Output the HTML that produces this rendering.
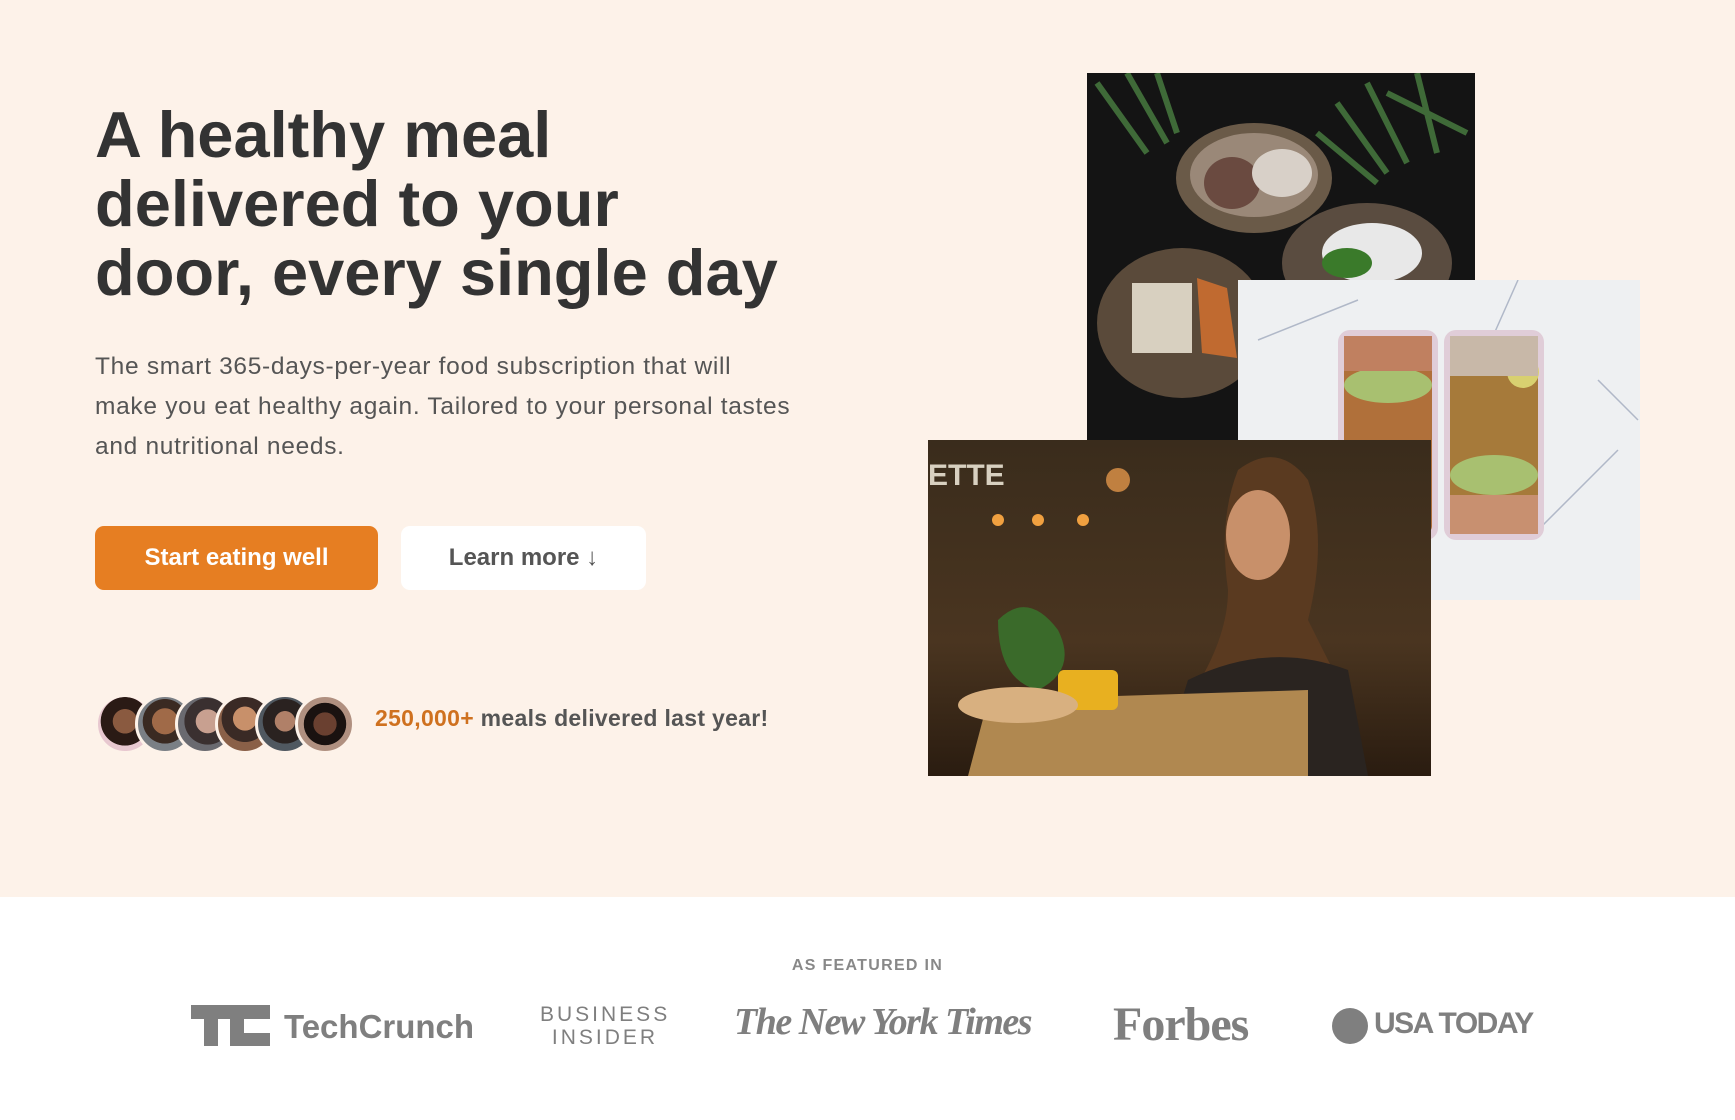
<!DOCTYPE html>
<html><head><meta charset="utf-8"><style>
*{margin:0;padding:0;box-sizing:border-box}
body{width:1735px;height:1120px;background:#fff;font-family:"Liberation Sans",sans-serif;color:#333;position:relative;overflow:hidden}
.hero{position:absolute;left:0;top:0;width:1735px;height:897px;background:#fdf2e9}
h1{position:absolute;left:95px;top:100px;font-size:65px;line-height:69px;font-weight:700;letter-spacing:0px;color:#333;white-space:nowrap}
.p{position:absolute;left:95px;top:347px;font-size:24.5px;line-height:40px;color:#555;white-space:nowrap;letter-spacing:0.7px}
.btn{position:absolute;top:526px;height:64px;border-radius:9px;font-size:24px;font-weight:700;display:flex;align-items:center;justify-content:center}
.b1{left:95px;width:283px;background:#e67e22;color:#fff}
.b2{left:401px;width:245px;background:#fff;color:#555}
.av{position:absolute;top:694px;width:60px;height:60px;border-radius:50%;border:3px solid #fdf2e9}
.dt{position:absolute;left:375px;top:705px;font-size:23px;font-weight:700;color:#555;letter-spacing:0.3px}
.dt b{color:#cf711f}
.img{position:absolute;overflow:hidden}
.ft{position:absolute;top:957px;left:0;width:1735px;text-align:center;font-size:16px;font-weight:700;letter-spacing:1.3px;color:#888}
.lg{position:absolute;color:#7f7f7f}
</style></head><body>
<div class="hero"></div>
<h1>A healthy meal<br>delivered to your<br>door, every single day</h1>
<div class="p">The smart 365-days-per-year food subscription that will<br>make you eat healthy again. Tailored to your personal tastes<br>and nutritional needs.</div>
<div class="btn b1">Start eating well</div>
<div class="btn b2">Learn more ↓</div>
<div class="av" style="left:95px;background:radial-gradient(circle at 50% 45%,#8a5a40 0 30%,#2a1a15 31% 60%,#e8c8d0 61%)"></div>
<div class="av" style="left:135px;background:radial-gradient(circle at 50% 45%,#a06a48 0 32%,#3a2a22 33% 55%,#7a7f85 56%)"></div>
<div class="av" style="left:175px;background:radial-gradient(circle at 55% 45%,#c8a090 0 28%,#3a3030 29% 55%,#6a6a70 56%)"></div>
<div class="av" style="left:215px;background:radial-gradient(circle at 50% 40%,#c8906a 0 28%,#3a2a25 29% 55%,#8a6048 56%)"></div>
<div class="av" style="left:255px;background:radial-gradient(circle at 50% 45%,#b08068 0 25%,#2a2220 26% 55%,#505860 56%)"></div>
<div class="av" style="left:295px;background:radial-gradient(circle at 50% 50%,#6a4030 0 30%,#1a1210 31% 55%,#b09080 56%)"></div>
<div class="dt"><b>250,000+</b> meals delivered last year!</div>

<div class="img" style="left:1087px;top:73px;width:388px;height:367px;background:#131313">
<svg width="388" height="367"><rect width="388" height="367" fill="#141414"/><path d="M10 10 L60 80 M40 0 L80 70 M70 0 L90 60 M250 30 L300 100 M280 10 L320 90 M330 0 L350 80 M300 20 L380 60 M230 60 L290 110" stroke="#3f6a38" stroke-width="6"/>
<ellipse cx="167" cy="105" rx="78" ry="55" fill="#6a5a48"/><ellipse cx="167" cy="102" rx="64" ry="42" fill="#9a8878"/><ellipse cx="145" cy="110" rx="28" ry="26" fill="#6a4a40"/><ellipse cx="195" cy="100" rx="30" ry="24" fill="#d8d0c8"/>
<ellipse cx="280" cy="190" rx="85" ry="60" fill="#5a4c40"/><ellipse cx="285" cy="180" rx="50" ry="30" fill="#e8e8e8"/><ellipse cx="260" cy="190" rx="25" ry="15" fill="#3a7a2a"/>
<ellipse cx="95" cy="250" rx="85" ry="75" fill="#5a4a3a"/><rect x="45" y="210" width="60" height="70" fill="#d8d0c0"/><path d="M110 205 l30 10 l10 70 l-35 -5z" fill="#c06a30"/></svg></div>
<div class="img" style="left:1238px;top:280px;width:402px;height:320px;background:#eceef0">
<svg width="402" height="320"><rect width="402" height="320" fill="#eef0f2"/><path d="M20 60 L120 20 M280 0 L240 90 M300 250 L380 170 M360 100 L400 140" stroke="#b0b8c8" stroke-width="1.5" fill="none"/>
<rect x="100" y="50" width="100" height="210" rx="12" fill="#e0cdd8"/><rect x="206" y="50" width="100" height="210" rx="12" fill="#e0cdd8"/>
<rect x="106" y="56" width="88" height="198" rx="8" fill="#b0703a"/><rect x="212" y="56" width="88" height="198" rx="8" fill="#a67a3a"/>
<ellipse cx="150" cy="105" rx="44" ry="18" fill="#a8c070"/><ellipse cx="256" cy="195" rx="44" ry="20" fill="#a8c070"/><circle cx="285" cy="92" r="16" fill="#d8d070"/>
<rect x="106" y="56" width="88" height="35" fill="#c08060"/><rect x="212" y="56" width="88" height="40" fill="#c8b8a8"/><rect x="212" y="215" width="88" height="39" fill="#c89070"/></svg></div>
<div class="img" style="left:928px;top:440px;width:503px;height:336px">
<svg width="503" height="336"><defs><linearGradient id="g" x1="0" y1="0" x2="0" y2="1"><stop offset="0" stop-color="#3a2c1c"/><stop offset=".6" stop-color="#4a3520"/><stop offset="1" stop-color="#2a1c10"/></linearGradient></defs>
<rect width="503" height="336" fill="url(#g)"/><text x="0" y="45" font-family="Liberation Sans" font-weight="700" font-size="30" fill="#d8d0c0">ETTE</text>
<circle cx="70" cy="80" r="6" fill="#f0a040"/><circle cx="110" cy="80" r="6" fill="#f0a040"/><circle cx="155" cy="80" r="6" fill="#f0a040"/><circle cx="190" cy="40" r="12" fill="#c08040"/>
<path d="M310 30 Q350 0 380 40 Q400 100 380 180 L420 260 L300 336 L260 260 Q300 200 300 150 Q290 80 310 30Z" fill="#5a3a20"/><ellipse cx="330" cy="95" rx="32" ry="45" fill="#c8906a"/>
<path d="M260 240 Q340 200 420 230 L440 336 L230 336Z" fill="#2a2420"/>
<path d="M40 336 L60 260 L380 250 L380 336Z" fill="#b08850"/><rect x="130" y="230" width="60" height="40" rx="6" fill="#e8b020"/><path d="M70 180 Q100 150 130 190 Q150 230 110 250 Q70 240 70 180Z" fill="#3a6a2a"/><ellipse cx="90" cy="265" rx="60" ry="18" fill="#d8b080"/></svg></div>

<div class="ft">AS FEATURED IN</div>
<svg class="lg" style="left:191px;top:1005px" width="80" height="42"><rect x="0" y="0" width="39" height="14" fill="#7f7f7f"/><rect x="13" y="14" width="14" height="27" fill="#7f7f7f"/><rect x="39" y="0" width="40" height="14" fill="#7f7f7f"/><rect x="39" y="14" width="14" height="27" fill="#7f7f7f"/><rect x="53" y="28" width="26" height="13" fill="#7f7f7f"/></svg>
<div class="lg" style="left:284px;top:1008px;font-size:33px;font-weight:700;letter-spacing:0px">TechCrunch</div>
<div class="lg" style="left:540px;top:1003px;font-size:21px;line-height:23px;letter-spacing:3px;text-align:center;width:130px">BUSINESS<br>INSIDER</div>
<div class="lg" style="left:734px;top:1000px;font-family:'Liberation Serif',serif;font-size:38px;font-weight:700;letter-spacing:-1.5px;font-style:italic">The New York Times</div>
<div class="lg" style="left:1113px;top:997px;font-family:'Liberation Serif',serif;font-size:48px;font-weight:700;letter-spacing:-1px">Forbes</div>
<div class="lg" style="left:1332px;top:1008px;width:36px;height:36px;border-radius:50%;background:#7f7f7f"></div>
<div class="lg" style="left:1374px;top:1007px;font-size:30px;font-weight:700;letter-spacing:-1.5px">USA TODAY</div>
</body></html>
